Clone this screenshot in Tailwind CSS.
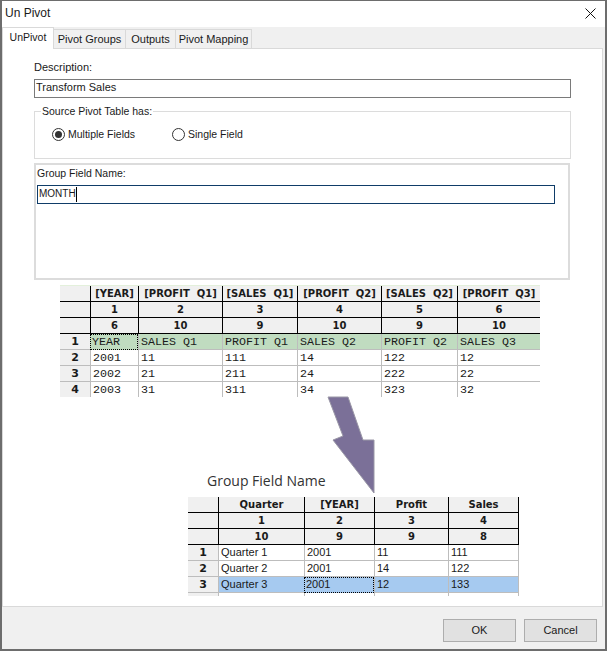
<!DOCTYPE html>
<html lang="en">
<head>
    <meta charset="UTF-8">
    <title>Un Pivot</title>
    <script src="https://cdn.jsdelivr.net/npm/@tailwindcss/browser@4"></script>
</head>
<body class="bg-white">
    <div class="relative w-[607px] h-[651px] overflow-hidden bg-[#f0f0f0] border-t border-l-2 border-r-2 border-b-2 border-[#6d6d6d] font-['Liberation_Sans',sans-serif] text-[11px] text-[#1a1a1a]">
        <!-- Title bar -->
        <div class="h-[26px] bg-white flex items-center justify-between pl-[3px] pr-[8px] pb-[2px]">
            <span class="text-[12px]">Un Pivot</span>
            <svg width="11" height="11" viewBox="0 0 11 11" class="mr-[1px]"><path d="M0.5 0.5L10.5 10.5M10.5 0.5L0.5 10.5" stroke="#111" fill="none"/></svg>
        </div>

        <!-- Tabs -->
        <div class="flex h-[21px] items-end">
            <div class="h-[22px] w-[52px] -mb-px z-10 bg-white border border-b-0 border-[#d9d9d9] flex items-center justify-center pb-[2px] text-[10.5px]">UnPivot</div>
            <div class="h-[19px] w-[72px] bg-[#f0f0f0] border-r border-t border-[#d9d9d9] flex items-center justify-center">Pivot Groups</div>
            <div class="h-[19px] w-[50px] bg-[#f0f0f0] border-r border-t border-[#d9d9d9] flex items-center justify-center">Outputs</div>
            <div class="h-[19px] w-[76px] bg-[#f0f0f0] border-r border-t border-[#d9d9d9] flex items-center justify-center">Pivot Mapping</div>
        </div>

        <!-- Tab panel -->
        <div class="h-[559px] w-[601px] bg-white border border-[#d9d9d9] pt-[12px] pl-[31px]">
            <div class="h-[14px] leading-[12px]">Description:</div>
            <div class="mt-[4px] w-[537px] h-[19px] border border-[#7a7a7a] pl-[1px] leading-[15px]">Transform Sales</div>

            <fieldset class="mt-[13px] w-[537px] h-[48px] border border-[#dcdcdc] relative text-[10.5px]">
                <span class="absolute left-[6px] -top-[7px] bg-white px-px leading-[13px]">Source Pivot Table has:</span>
                <div class="flex items-center pl-[17px] pt-[15px]">
                    <span class="w-[13px] h-[13px] rounded-full border border-[#333] flex items-center justify-center"><span class="w-[7px] h-[7px] rounded-full bg-[#333]"></span></span>
                    <span class="ml-[3px] w-[104px]">Multiple Fields</span>
                    <span class="w-[13px] h-[13px] rounded-full border border-[#333]"></span>
                    <span class="ml-[3px]">Single Field</span>
                </div>
            </fieldset>

            <div class="mt-[4px] w-[536px] h-[117px] border-2 border-[#dcdcdc] pl-[1px] pt-[2px]">
                <div class="h-[14px] leading-[12px] text-[10.5px]">Group Field Name:</div>
                <div class="mt-[4px] w-[518px] h-[19px] border border-[#0f3c68] pl-px flex items-center text-[10px]"><span class="-mt-[2px]">MONTH</span><span class="w-px h-[15px] bg-black"></span></div>
            </div>

            <!-- Source pivot table -->
            <div class="mt-[5px] ml-[26px] w-[480px] border-t border-[#e3f0db] grid grid-cols-[30px_48px_84px_75px_84px_76px_83px] grid-rows-[16px_16px_16px_16px_16px_16px_15px] font-['Liberation_Mono',monospace] text-[11.67px] leading-[16px]">
                <div class="bg-[#f0f0f0] border-b border-black"></div>
                <div class="bg-[#f0f0f0] border-l border-b border-black font-['DejaVu_Sans',sans-serif] text-[10px] font-bold text-center whitespace-pre">[YEAR]</div>
                <div class="bg-[#f0f0f0] border-l border-b border-black font-['DejaVu_Sans',sans-serif] text-[10px] font-bold text-center whitespace-pre">[PROFIT  Q1]</div>
                <div class="bg-[#f0f0f0] border-l border-b border-black font-['DejaVu_Sans',sans-serif] text-[10px] font-bold text-center whitespace-pre">[SALES  Q1]</div>
                <div class="bg-[#f0f0f0] border-l border-b border-black font-['DejaVu_Sans',sans-serif] text-[10px] font-bold text-center whitespace-pre">[PROFIT  Q2]</div>
                <div class="bg-[#f0f0f0] border-l border-b border-black font-['DejaVu_Sans',sans-serif] text-[10px] font-bold text-center whitespace-pre">[SALES  Q2]</div>
                <div class="bg-[#f0f0f0] border-l border-b border-black font-['DejaVu_Sans',sans-serif] text-[10px] font-bold text-center whitespace-pre">[PROFIT  Q3]</div>

                <div class="bg-[#f0f0f0] border-b border-black"></div>
                <div class="bg-[#f0f0f0] border-l border-b border-black font-['DejaVu_Sans',sans-serif] text-[10px] font-bold text-center">1</div>
                <div class="bg-[#f0f0f0] border-l border-b border-black font-['DejaVu_Sans',sans-serif] text-[10px] font-bold text-center">2</div>
                <div class="bg-[#f0f0f0] border-l border-b border-black font-['DejaVu_Sans',sans-serif] text-[10px] font-bold text-center">3</div>
                <div class="bg-[#f0f0f0] border-l border-b border-black font-['DejaVu_Sans',sans-serif] text-[10px] font-bold text-center">4</div>
                <div class="bg-[#f0f0f0] border-l border-b border-black font-['DejaVu_Sans',sans-serif] text-[10px] font-bold text-center">5</div>
                <div class="bg-[#f0f0f0] border-l border-b border-black font-['DejaVu_Sans',sans-serif] text-[10px] font-bold text-center">6</div>

                <div class="bg-[#f0f0f0] border-b border-black"></div>
                <div class="bg-[#f0f0f0] border-l border-b border-black font-['DejaVu_Sans',sans-serif] text-[10px] font-bold text-center">6</div>
                <div class="bg-[#f0f0f0] border-l border-b border-black font-['DejaVu_Sans',sans-serif] text-[10px] font-bold text-center">10</div>
                <div class="bg-[#f0f0f0] border-l border-b border-black font-['DejaVu_Sans',sans-serif] text-[10px] font-bold text-center">9</div>
                <div class="bg-[#f0f0f0] border-l border-b border-black font-['DejaVu_Sans',sans-serif] text-[10px] font-bold text-center">10</div>
                <div class="bg-[#f0f0f0] border-l border-b border-black font-['DejaVu_Sans',sans-serif] text-[10px] font-bold text-center">9</div>
                <div class="bg-[#f0f0f0] border-l border-b border-black font-['DejaVu_Sans',sans-serif] text-[10px] font-bold text-center">10</div>

                <div class="bg-[#f0f0f0] border-b border-[#bdbdbd] font-['DejaVu_Sans',sans-serif] text-[11px] font-bold text-center">1</div>
                <div class="bg-[#c0dcc0] border border-dotted border-black pl-px leading-[14px]">YEAR</div>
                <div class="bg-[#c0dcc0] border-l border-b border-[#bdbdbd] pl-[2px]">SALES Q1</div>
                <div class="bg-[#c0dcc0] border-l border-b border-[#bdbdbd] pl-[2px]">PROFIT Q1</div>
                <div class="bg-[#c0dcc0] border-l border-b border-[#bdbdbd] pl-[2px]">SALES Q2</div>
                <div class="bg-[#c0dcc0] border-l border-b border-[#bdbdbd] pl-[2px]">PROFIT Q2</div>
                <div class="bg-[#c0dcc0] border-l border-b border-[#bdbdbd] pl-[2px]">SALES Q3</div>

                <div class="bg-[#f0f0f0] border-b border-[#bdbdbd] font-['DejaVu_Sans',sans-serif] text-[11px] font-bold text-center">2</div>
                <div class="border-l border-b border-[#bdbdbd] pl-[2px]">2001</div>
                <div class="border-l border-b border-[#bdbdbd] pl-[2px]">11</div>
                <div class="border-l border-b border-[#bdbdbd] pl-[2px]">111</div>
                <div class="border-l border-b border-[#bdbdbd] pl-[2px]">14</div>
                <div class="border-l border-b border-[#bdbdbd] pl-[2px]">122</div>
                <div class="border-l border-b border-[#bdbdbd] pl-[2px]">12</div>

                <div class="bg-[#f0f0f0] border-b border-[#bdbdbd] font-['DejaVu_Sans',sans-serif] text-[11px] font-bold text-center">3</div>
                <div class="border-l border-b border-[#bdbdbd] pl-[2px]">2002</div>
                <div class="border-l border-b border-[#bdbdbd] pl-[2px]">21</div>
                <div class="border-l border-b border-[#bdbdbd] pl-[2px]">211</div>
                <div class="border-l border-b border-[#bdbdbd] pl-[2px]">24</div>
                <div class="border-l border-b border-[#bdbdbd] pl-[2px]">222</div>
                <div class="border-l border-b border-[#bdbdbd] pl-[2px]">22</div>

                <div class="bg-[#f0f0f0] font-['DejaVu_Sans',sans-serif] text-[11px] font-bold text-center">4</div>
                <div class="border-l border-[#bdbdbd] pl-[2px]">2003</div>
                <div class="border-l border-[#bdbdbd] pl-[2px]">31</div>
                <div class="border-l border-[#bdbdbd] pl-[2px]">311</div>
                <div class="border-l border-[#bdbdbd] pl-[2px]">34</div>
                <div class="border-l border-[#bdbdbd] pl-[2px]">323</div>
                <div class="border-l border-[#bdbdbd] pl-[2px]">32</div>
            </div>

            <div class="mt-[74px] ml-[173px] h-[20px] text-[14px] leading-[20px] font-['Open_Sans',sans-serif] text-[#333]">Group Field Name</div>

            <!-- Result table -->
            <div class="mt-[6px] ml-[154px] w-[331px] grid grid-cols-[30px_86px_70px_74px_71px] grid-rows-[16px_16px_16px_16px_16px_16px_3px] font-['Liberation_Sans',sans-serif] text-[11px] leading-[15px]">
                <div class="bg-[#f0f0f0] border-b border-black"></div>
                <div class="bg-[#f0f0f0] border-l border-b border-black font-['DejaVu_Sans',sans-serif] text-[10px] font-bold text-center">Quarter</div>
                <div class="bg-[#f0f0f0] border-l border-b border-black font-['DejaVu_Sans',sans-serif] text-[10px] font-bold text-center">[YEAR]</div>
                <div class="bg-[#f0f0f0] border-l border-b border-black font-['DejaVu_Sans',sans-serif] text-[10px] font-bold text-center">Profit</div>
                <div class="bg-[#f0f0f0] border-l border-b border-r border-black font-['DejaVu_Sans',sans-serif] text-[10px] font-bold text-center">Sales</div>

                <div class="bg-[#f0f0f0] border-b border-black"></div>
                <div class="bg-[#f0f0f0] border-l border-b border-black font-['DejaVu_Sans',sans-serif] text-[10px] font-bold text-center">1</div>
                <div class="bg-[#f0f0f0] border-l border-b border-black font-['DejaVu_Sans',sans-serif] text-[10px] font-bold text-center">2</div>
                <div class="bg-[#f0f0f0] border-l border-b border-black font-['DejaVu_Sans',sans-serif] text-[10px] font-bold text-center">3</div>
                <div class="bg-[#f0f0f0] border-l border-b border-r border-black font-['DejaVu_Sans',sans-serif] text-[10px] font-bold text-center">4</div>

                <div class="bg-[#f0f0f0] border-b border-black"></div>
                <div class="bg-[#f0f0f0] border-l border-b border-black font-['DejaVu_Sans',sans-serif] text-[10px] font-bold text-center">10</div>
                <div class="bg-[#f0f0f0] border-l border-b border-black font-['DejaVu_Sans',sans-serif] text-[10px] font-bold text-center">9</div>
                <div class="bg-[#f0f0f0] border-l border-b border-black font-['DejaVu_Sans',sans-serif] text-[10px] font-bold text-center">9</div>
                <div class="bg-[#f0f0f0] border-l border-b border-r border-black font-['DejaVu_Sans',sans-serif] text-[10px] font-bold text-center">8</div>

                <div class="bg-[#f0f0f0] border-b border-[#bdbdbd] font-['DejaVu_Sans',sans-serif] font-bold text-center">1</div>
                <div class="border-l border-b border-[#bdbdbd] pl-[2px]">Quarter 1</div>
                <div class="border-l border-b border-[#bdbdbd] pl-[2px]">2001</div>
                <div class="border-l border-b border-[#bdbdbd] pl-[2px]">11</div>
                <div class="border-l border-b border-r border-[#bdbdbd] pl-[2px]">111</div>

                <div class="bg-[#f0f0f0] border-b border-[#bdbdbd] font-['DejaVu_Sans',sans-serif] font-bold text-center">2</div>
                <div class="border-l border-b border-[#bdbdbd] pl-[2px]">Quarter 2</div>
                <div class="border-l border-b border-[#bdbdbd] pl-[2px]">2001</div>
                <div class="border-l border-b border-[#bdbdbd] pl-[2px]">14</div>
                <div class="border-l border-b border-r border-[#bdbdbd] pl-[2px]">122</div>

                <div class="bg-[#f0f0f0] border-b border-[#bdbdbd] font-['DejaVu_Sans',sans-serif] font-bold text-center">3</div>
                <div class="bg-[#a6caf0] border-l border-b border-[#bdbdbd] pl-[2px]">Quarter 3</div>
                <div class="bg-[#a6caf0] border border-dotted border-black pl-px leading-[13px]">2001</div>
                <div class="bg-[#a6caf0] border-l border-b border-[#bdbdbd] pl-[2px]">12</div>
                <div class="bg-[#a6caf0] border-l border-b border-r border-[#bdbdbd] pl-[2px]">133</div>

                <div class="bg-[#f0f0f0]"></div>
                <div class="border-l border-[#bdbdbd]"></div>
                <div class="border-l border-[#bdbdbd]"></div>
                <div class="border-l border-[#bdbdbd]"></div>
                <div class="border-l border-r border-[#bdbdbd]"></div>
            </div>
        </div>

        <!-- Arrow between the two tables -->
        <svg class="absolute left-[323px] top-[394px]" width="52" height="102" viewBox="0 0 52 102">
            <path d="M3 2L23 2L38 45L49 45L49 98L8 45L18 41Z" fill="#7b7098" stroke="#9a97a6"/>
        </svg>

        <!-- Buttons -->
        <div class="absolute left-[441px] top-[618px] flex gap-[8px]">
            <button class="w-[73px] h-[23px] bg-[#e1e1e1] border border-[#adadad] text-[11px]">OK</button>
            <button class="w-[73px] h-[23px] bg-[#e1e1e1] border border-[#adadad] text-[11px]">Cancel</button>
        </div>
    </div>
</body>
</html>
